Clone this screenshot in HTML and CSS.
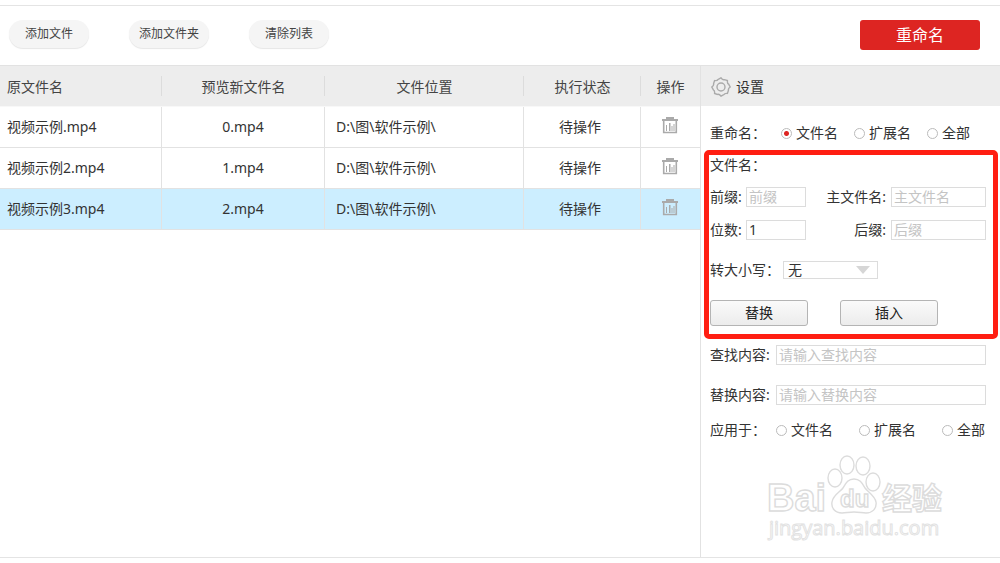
FILE: index.html
```
<!DOCTYPE html>
<html lang="zh-CN">
<head>
<meta charset="UTF-8" />
<meta name="viewport" content="width=device-width, initial-scale=1" />
<title>重命名</title>
<link rel="stylesheet" href="styles.css">
</head>
<body>

<svg class="defs" aria-hidden="true">
  <symbol id="trash" viewBox="0 0 16 17">
    <path d="M4 0h8v2h4v2H0V2h4z" fill="currentColor" />
    <path d="M1.700 3.500v12h12.600v-12" fill="none" stroke="currentColor" stroke-width="1.6" />
    <path d="M4 8h1v6H4zM7 6h1.500v8H7zM9.500 9h1v5h-1zM11.500 7h1v7h-1z" fill="currentColor" />
  </symbol>
</svg>

<div class="app">
  <header class="toolbar">
    <button class="pill">添加文件</button>
    <button class="pill">添加文件夹</button>
    <button class="pill">清除列表</button>
    <button class="rename">重命名</button>
  </header>

  <div class="content">
    <main class="list">
      <table class="files">
        <thead>
          <tr>
            <th class="col-name">原文件名</th>
            <th class="col-new">预览新文件名</th>
            <th class="col-path">文件位置</th>
            <th class="col-state">执行状态</th>
            <th class="col-action">操作</th>
          </tr>
        </thead>
        <tbody>
          <tr>
            <td class="col-name">视频示例.mp4</td>
            <td class="col-new">0.mp4</td>
            <td class="col-path">D:\图\软件示例\</td>
            <td class="col-state">待操作</td>
            <td class="col-action"><button class="delete" aria-label="删除"><svg><use href="#trash" /></svg></button></td>
          </tr>
          <tr>
            <td class="col-name">视频示例2.mp4</td>
            <td class="col-new">1.mp4</td>
            <td class="col-path">D:\图\软件示例\</td>
            <td class="col-state">待操作</td>
            <td class="col-action"><button class="delete" aria-label="删除"><svg><use href="#trash" /></svg></button></td>
          </tr>
          <tr class="selected">
            <td class="col-name">视频示例3.mp4</td>
            <td class="col-new">2.mp4</td>
            <td class="col-path">D:\图\软件示例\</td>
            <td class="col-state">待操作</td>
            <td class="col-action"><button class="delete" aria-label="删除"><svg><use href="#trash" /></svg></button></td>
          </tr>
        </tbody>
      </table>
    </main>

    <aside class="settings">
      <h2 class="settings-title">
        <svg class="gear" viewBox="0 0 20 20" fill="none" stroke="#aaa" stroke-width="1.4">
          <path d="M10 .8 Q11.6 3.2 13.5 2.7 L16.4 3.6 Q16.1 6.4 17.6 7.1 L19.2 10 Q17 11.5 17.4 13.5 L16.4 16.4 Q13.6 16.1 12.9 17.6 L10 19.2 Q8.4 16.9 6.5 17.4 L3.6 16.4 Q3.9 13.6 2.4 12.9 L.8 10 Q3.1 8.4 2.6 6.5 L3.6 3.6 Q6.4 3.9 7.1 2.4 Z" />
          <circle cx="10" cy="10" r="4" />
        </svg>
        设置
      </h2>

      <div class="radios target" role="radiogroup" aria-labelledby="targetLabel">
        <span class="radios-label" id="targetLabel">重命名：</span>
        <label><input type="radio" name="target" checked>文件名</label>
        <label><input type="radio" name="target">扩展名</label>
        <label><input type="radio" name="target">全部</label>
      </div>

      <section class="highlight">
        <h3 class="group-title">文件名：</h3>
        <div class="fields">
          <label for="prefix">前缀:</label>
          <input type="text" id="prefix" placeholder="前缀">
          <label class="right" for="mainName">主文件名:</label>
          <input type="text" id="mainName" placeholder="主文件名">
          <label for="digits">位数:</label>
          <input type="text" id="digits" value="1">
          <label class="right" for="suffix">后缀:</label>
          <input type="text" id="suffix" placeholder="后缀">
        </div>
        <div class="case">
          <label for="letterCase">转大小写：</label>
          <select id="letterCase">
            <option>无</option>
          </select>
        </div>
        <div class="actions">
          <button class="action">替换</button>
          <button class="action">插入</button>
        </div>
      </section>

      <div class="line">
        <label for="findText">查找内容:</label>
        <input type="text" id="findText" placeholder="请输入查找内容">
      </div>
      <div class="line">
        <label for="replaceText">替换内容:</label>
        <input type="text" id="replaceText" placeholder="请输入替换内容">
      </div>

      <div class="radios apply" role="radiogroup" aria-labelledby="applyLabel">
        <span class="radios-label" id="applyLabel">应用于：</span>
        <label><input type="radio" name="apply">文件名</label>
        <label><input type="radio" name="apply">扩展名</label>
        <label><input type="radio" name="apply">全部</label>
      </div>

      <svg class="watermark" viewBox="0 0 184 90">
        <g fill="#fff" stroke="#dcdcdc" stroke-width="1.4">
          <text class="wm-bai" x="1" y="56">Bai</text>
          <ellipse cx="69" cy="23" rx="7" ry="9" />
          <ellipse cx="81" cy="10" rx="7" ry="9" />
          <ellipse cx="97" cy="11" rx="7" ry="9" />
          <ellipse cx="107" cy="27" rx="7" ry="9" />
          <path d="M88 24c6 0 8 4 11 9 3 4 10 8 11 14 1 7-4 11-10 11-4 0-7-1-12-1s-8 1-12 1c-7 0-11-5-10-11 1-7 8-10 11-14 3-5 5-9 11-9z" />
          <text class="wm-du" x="74" y="52">du</text>
          <text class="wm-cn" x="116" y="54">经验</text>
        </g>
        <text class="wm-url" x="3" y="80">jingyan.baidu.com</text>
      </svg>
    </aside>
  </div>
</div>

</body>
</html>
```

FILE: styles.css
```
* { box-sizing: border-box; }
body { margin: 0; padding: 5px 0; background: #fff; color: #333; }
body, button, input, select { font-family: "Noto Sans", "Noto Sans CJK SC", sans-serif; font-size: 14px; line-height: 20px; }
h2, h3 { margin: 0; font-size: 14px; font-weight: normal; }
button { padding: 0; cursor: pointer; }
.defs { display: none; }

.app { display: flex; flex-direction: column; min-height: calc(100vh - 10px); border-top: 1px solid #e4e4e4; border-bottom: 1px solid #e4e4e4; }

/* toolbar */
.toolbar { display: flex; align-items: flex-start; gap: 40px; height: 60px; padding: 14px 20px 0 9px; border-bottom: 1px solid #e2e2e2; }
.pill { width: 80px; height: 28px; border: none; border-radius: 14px; background: #f5f5f5; box-shadow: 0 1px 1px #e6e6e6; color: #444; font-size: 12px; }
.rename { width: 120px; height: 30px; margin-left: auto; border: none; border-radius: 3px; background: #dd2522; color: #fff; font-size: 16px; }

.content { display: flex; flex: 1; }
.list { flex: 1; }

/* file table */
.files { width: 100%; border-collapse: separate; border-spacing: 0; table-layout: fixed; }
.files th { height: 41px; padding: 2px 0 0; border-bottom: 1px solid #f8f8f8; background: #ededed linear-gradient(#dcdcdc, #dcdcdc) no-repeat right center / 1px 20px; color: #444; font-weight: normal; text-align: center; }
.files td { height: 41px; padding: 0; border-right: 1px solid #e2e2e2; border-bottom: 1px solid #e2e2e2; text-align: center; }
.files th:last-child { background: #ededed; }
.files td:last-child { border-right: none; }
.files .col-name { width: 162px; padding-left: 7px; text-align: left; }
.files .col-new { width: 163px; }
.files .col-state { width: 117px; }
.files .col-action { width: 59px; }
.files td.col-path { padding-left: 11px; text-align: left; }
.files td.col-state { padding-right: 4px; }
.files td.col-action { padding: 0 2px 4px 0; }
.files .selected td { background: #cceeff; }
.delete { display: block; width: 16px; height: 17px; margin: auto; border: none; background: none; color: #aaa; }
.delete svg { display: block; width: 16px; height: 17px; }

/* settings panel */
.settings { width: 300px; border-left: 1px solid #e2e2e2; }
.settings-title { display: flex; align-items: center; gap: 5px; height: 40px; padding: 2px 10px 0; background: #ededed; }
.gear { width: 20px; height: 20px; }

.radios { display: flex; align-items: center; padding-left: 9px; }
.radios label { display: flex; align-items: center; gap: 4px; }
.radios input { appearance: none; width: 11px; height: 11px; margin: 0; border: 1px solid #bbb; border-radius: 50%; background: #fff; }
.radios input:checked { background: radial-gradient(circle, #dd2522 2px, #fff 3px); }
.target { gap: 16px; margin-top: 17px; }
.target .radios-label { width: 55px; white-space: nowrap; }
.apply { gap: 26px; margin-top: 15px; }
.apply .radios-label { width: 40px; white-space: nowrap; }

input[type=text] { width: 100%; min-width: 0; height: 20px; padding: 0 2px; border: 1px solid #dcdcdc; background: #fff; color: #333; }
input::placeholder { color: #c4c4c4; opacity: 1; }

.highlight { margin: 7px 2px 0 3px; padding: 0 7px 8px 1px; border: 5px solid #ff1e12; border-radius: 5px; }
.fields { display: grid; grid-template-columns: 36px 60px 85px 1fr; row-gap: 13px; margin-top: 12px; }
.fields label { white-space: nowrap; }
.fields .right { padding-right: 5px; text-align: right; }
.case { display: flex; align-items: center; gap: 3px; margin-top: 20px; }
.case select { appearance: none; width: 95px; height: 18px; padding: 0 4px; border: 1px solid #dcdcdc; border-radius: 0; color: #333; line-height: 16px; background: #fff url("data:image/svg+xml,%3Csvg xmlns='http://www.w3.org/2000/svg' width='14' height='8'%3E%3Cpath d='M0 0h14L7 8z' fill='%23d6d6d6'/%3E%3C/svg%3E") no-repeat right 7px center; }
.actions { display: flex; gap: 32px; margin-top: 20px; }
.action { width: 98px; height: 26px; border: 1px solid #b4b4b4; border-radius: 3px; background: linear-gradient(#fafafa, #ececec); color: #222; }

.line { display: flex; margin-top: 20px; padding: 0 14px 0 9px; }
.line label { flex: none; width: 66px; }
.highlight + .line { margin-top: 6px; }

/* watermark */
.watermark { display: block; width: 184px; height: 90px; margin: 15px 0 0 65px; }
.wm-bai { font: bold 38px "Liberation Sans", sans-serif; }
.wm-du { font: bold 24px "Liberation Sans", sans-serif; }
.wm-cn { font: bold 30px "Noto Sans CJK SC", sans-serif; }
.wm-url { fill: #fff; stroke: #e2e2e2; stroke-width: 1; font: 20px "Open Sans", "Noto Sans", sans-serif; }
```
